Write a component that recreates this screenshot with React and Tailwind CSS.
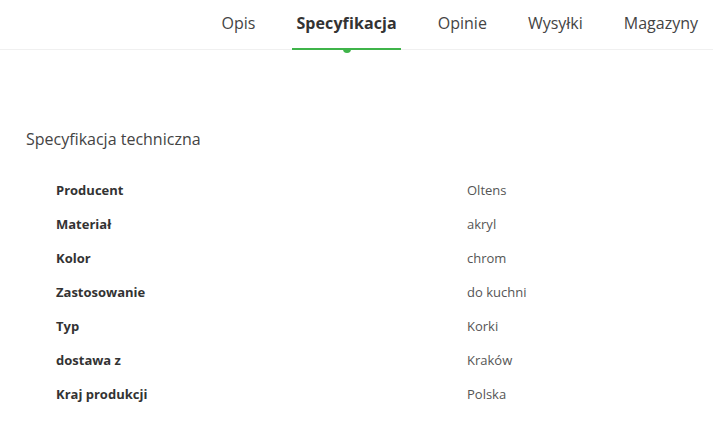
const TABS = [
  { label: 'Opis' },
  { label: 'Specyfikacja', active: true },
  { label: 'Opinie' },
  { label: 'Wysyłki' },
  { label: 'Magazyny' },
];

const SPECS = [
  ['Producent', 'Oltens'],
  ['Materiał', 'akryl'],
  ['Kolor', 'chrom'],
  ['Zastosowanie', 'do kuchni'],
  ['Typ', 'Korki'],
  ['dostawa z', 'Kraków'],
  ['Kraj produkcji', 'Polska'],
];

export default function App() {
  return (
    <div className="w-[713px] h-[442px] bg-white overflow-hidden" style={{ fontFamily: '"Open Sans", "Liberation Sans", sans-serif' }}>
      {/* Tabs */}
      <div className="h-[50px] border-b border-[#f0f0f0] flex justify-end items-stretch pr-[11px] gap-[33px]">
        {TABS.map((tab) => (
          <div key={tab.label} className="relative px-[4px] flex items-center pb-[4px]">
            <span className={tab.active ? 'text-[16px] font-bold text-[#333] tracking-[0.1px]' : 'text-[16px] text-[#444]'}>{tab.label}</span>
            {tab.active && (
              <>
                <span className="absolute left-0 right-0 bottom-[-1px] h-[2px] bg-[#3fb44a]" />
                <span className="absolute left-1/2 -translate-x-1/2 bottom-[-4px] w-[8px] h-[4px] rounded-b-full bg-[#3fb44a]" />
              </>
            )}
          </div>
        ))}
      </div>

      {/* Content */}
      <div className="px-[26px] pt-[77px]">
        <h2 className="text-[16px] leading-[24px] text-[#444]">Specyfikacja techniczna</h2>
        <div className="mt-[23px] pl-[30px]">
          {SPECS.map(([label, value]) => (
            <div key={label} className="flex h-[34px] items-center text-[13px]">
              <span className="w-[411px] font-bold text-[#333]">{label}</span>
              <span className="text-[#555]">{value}</span>
            </div>
          ))}
        </div>
      </div>
    </div>
  );
}
